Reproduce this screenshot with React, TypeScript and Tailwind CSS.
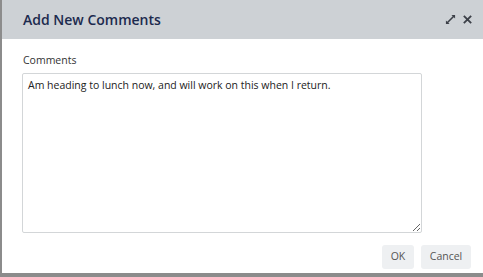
import React from "react";

export default function App() {
  return (
    <div className="w-[483px] h-[277px] flex flex-col bg-white border-l-2 border-b-[4px] border-[#8c8c8c] overflow-hidden" style={{ fontFamily: '"Open Sans", "Noto Sans", sans-serif' }}>
      <div className="h-[39px] shrink-0 bg-[#cdd1d5] flex items-center pl-[21px] pr-[10px]">
        <div className="text-[14px] text-[#1c2a4e] font-semibold flex-1 leading-none">Add New Comments</div>
        <div className="flex items-center gap-[6px] text-[#3c4048]">
          <svg width="11" height="11" viewBox="0 0 12 12" fill="currentColor">
            <path d="M7 1h4v4L9.6 3.6 3.6 9.6 5 11H1V7l1.4 1.4 6-6z" />
          </svg>
          <svg width="11" height="11" viewBox="0 0 12 12" stroke="currentColor" strokeWidth="2" fill="none">
            <path d="M2 2l8 8M10 2l-8 8" />
          </svg>
        </div>
      </div>
      <div className="flex-1 flex flex-col px-[20px] pt-[14px]">
        <div className="text-[10.5px] text-[#333] leading-[15px] mb-[5px] ml-px">Comments</div>
        <textarea
          className="w-[400px] h-[160px] border border-[#d3d6d8] rounded-[2px] px-[5px] py-[4px] text-[10.5px] leading-[15px] text-[#222] outline-none"
          style={{ fontFamily: '"Open Sans", "Noto Sans", sans-serif' }}
          defaultValue="Am heading to lunch now, and will work on this when I return."
        />
        <div className="flex justify-end gap-[7px] mt-[12px] mr-[-8px]">
          <button className="w-[32px] h-[24px] rounded-[3px] bg-[#eef0f2] text-[10.5px] text-[#555]">OK</button>
          <button className="w-[50px] h-[24px] rounded-[3px] bg-[#eef0f2] text-[10.5px] text-[#555]">Cancel</button>
        </div>
      </div>
    </div>
  );
}
